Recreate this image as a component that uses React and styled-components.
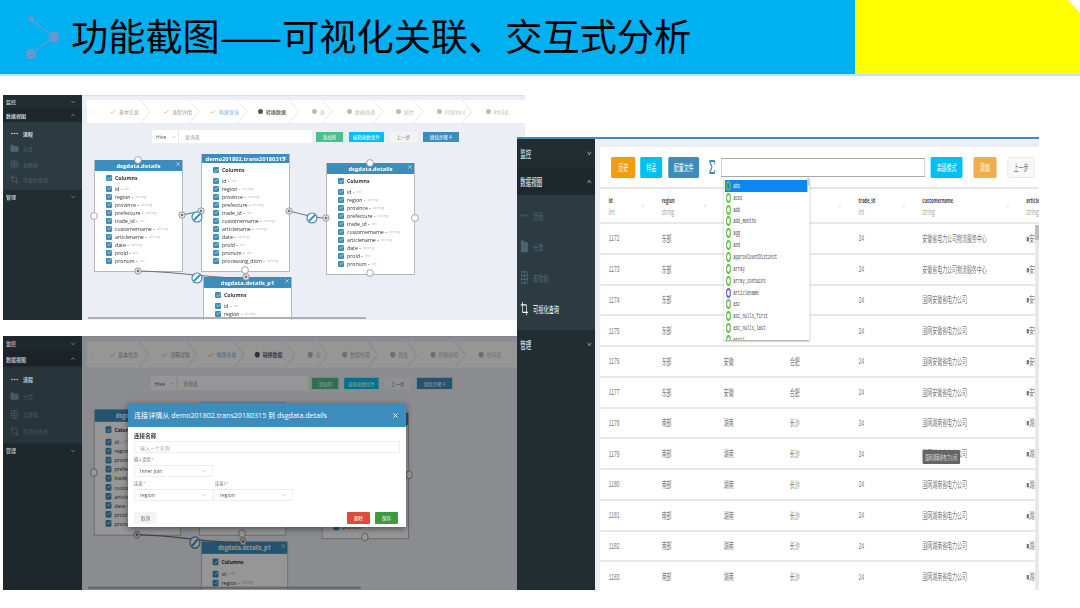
import React from "react";
import styled, { createGlobalStyle } from "styled-components";
import {
  Check,
  ChevronDown,
  ChevronLeft,
  ChevronUp,
  Crop,
  Ellipsis,
  Folder,
  FolderInput,
  Sigma,
  Table,
  X,
} from "lucide-react";

const CJK = `"Liberation Sans", "Noto Sans CJK SC", sans-serif`;
const LATIN = `"Open Sans", "Noto Sans CJK SC", sans-serif`;

// the right-hand screenshot is squeezed horizontally in the slide
const RIGHT_SX = 0.55;

//////////
// STYLE
//////////

const GlobalStyle = createGlobalStyle`
  html, body {
    margin: 0;
    padding: 0;
    background: #fff;
    width: 1080px;
    height: 608px;
    overflow: hidden;
    font-family: ${CJK};
  }
  * { box-sizing: border-box; }
`;

const Slide = styled.div`
  width: 1080px;
  height: 608px;
  background: #fff;
  overflow: hidden;
`;

const Banner = styled.header`
  display: flex;
  height: 76px;
  border-bottom: 2px solid #bfe6f6;
`;

const BannerBlue = styled.div`
  width: 855px;
  background: #00b0f0;
  display: flex;
  align-items: center;
  padding-left: 23px;
`;

const BannerYellow = styled.div`
  flex: 1;
  background: #ffff00;
  clip-path: polygon(0 0, 213px 0, 225px 13px, 225px 100%, 0 100%);
`;

const BannerTitle = styled.h1`
  margin: 0 0 3px 12px;
  font-family: "Noto Sans CJK SC", sans-serif;
  font-weight: 400;
  font-size: 37.2px;
  line-height: 1;
  color: #000;
  white-space: nowrap;
`;

const Body = styled.div`
  display: flex;
  padding-top: 19px;
`;

const LeftColumn = styled.div`
  width: 525px;
  flex-shrink: 0;
`;

const TopFrame = styled.div`
  margin-left: 3px;
  width: 522px;
  height: 225px;
  overflow: hidden;
  filter: blur(0.6px);
`;

const LowerFrame = styled.div`
  position: relative;
  margin: 16px 0 0 3px;
  width: 514px;
  height: 254px;
  overflow: hidden;
  filter: blur(0.6px);
`;

const Designer = styled.div`
  display: flex;
  width: 522px;
  height: 225px;
  transform: scaleY(${(p) => p.$sy});
  transform-origin: left top;
`;

const Side = styled.nav`
  width: 79px;
  flex-shrink: 0;
  background: #222d32;
  color: #b8c7ce;
  font-size: 5px;
`;

const SideHead = styled.div`
  display: flex;
  justify-content: space-between;
  align-items: center;
  height: ${(p) => p.$h}px;
  padding: 0 6px 0 3px;
  font-weight: 700;
  background: ${(p) => (p.$open ? "#1e282c" : "transparent")};
  color: ${(p) => (p.$open ? "#c8d4d9" : "#b8c7ce")};
`;

const SideGroup = styled.div`
  background: #2c3b41;
  padding: 4px 0 3px;
`;

const SideItem = styled.div`
  display: flex;
  align-items: center;
  gap: 4px;
  height: 15.3px;
  padding-left: 7px;
  color: ${(p) => (p.$on ? "#dfe6e9" : "#4b646f")};
  font-weight: ${(p) => (p.$on ? 700 : 400)};
`;

const MainPane = styled.div`
  width: 443px;
  flex-shrink: 0;
  height: 100%;
  background: #ebeef4;
  border-top: 1px solid #d6e4ef;
  padding-top: 4px;
  display: flex;
  flex-direction: column;
  transform: scaleX(${(p) => p.$sx});
  transform-origin: left top;
`;

const Steps = styled.div`
  display: flex;
  align-items: center;
  height: 23px;
  margin-left: 5px;
  flex-shrink: 0;
  background: #fff;
`;

const Step = styled.div`
  position: relative;
  display: flex;
  align-items: center;
  gap: 3px;
  height: 100%;
  width: ${(p) => p.$w}px;
  flex-shrink: 0;
  padding-left: ${(p) => p.$pad}px;
  font-size: 5px;
  white-space: nowrap;
  color: ${(p) => p.$color};
  font-weight: ${(p) => (p.$bold ? 700 : 400)};
`;

const StepDot = styled.span`
  width: 5px;
  height: 5px;
  border-radius: 50%;
  background: ${(p) => p.$color};
  flex-shrink: 0;
`;

const StepArrow = styled.svg`
  position: absolute;
  right: 0;
  top: 0;
`;

const Toolbar = styled.div`
  display: flex;
  align-items: center;
  height: 13px;
  margin: 7px 0 7px 70px;
  flex-shrink: 0;
`;

const EngineSelect = styled.div`
  display: flex;
  align-items: center;
  justify-content: space-between;
  width: 26px;
  height: 100%;
  padding: 0 2px 0 4px;
  background: #fff;
  font: 5px ${LATIN};
  color: #555;
`;

const QueryInput = styled.div`
  display: flex;
  align-items: center;
  width: 134px;
  height: 100%;
  padding-left: 6px;
  background: #fff;
  border-left: 1px solid #e6e6e6;
  font-size: 5px;
  color: #999;
`;

const FlatButton = styled.div`
  display: flex;
  align-items: center;
  justify-content: center;
  width: ${(p) => p.$w}px;
  height: 10px;
  margin-left: ${(p) => p.$ml}px;
  background: ${(p) => p.$bg};
  color: ${(p) => p.$fg || "#fff"};
  font-size: 4.5px;
`;

const Canvas = styled.div`
  position: relative;
  flex: 1;
  overflow: hidden;
`;

const Wires = styled.svg`
  position: absolute;
  inset: 0;
  width: 100%;
  height: 100%;
  z-index: 2;
`;

const Node = styled.div`
  position: absolute;
  left: ${(p) => p.$x}px;
  top: ${(p) => p.$y}px;
  width: 89px;
  background: #fff;
  border: 1.5px solid #b5b8bc;
  border-top: 0;
  padding-bottom: 6px;
  z-index: 1;
`;

const NodeHead = styled.div`
  position: relative;
  display: flex;
  align-items: center;
  justify-content: center;
  height: ${(p) => p.$h}px;
  background: #3c8dbc;
  color: #fff;
  font: 700 5.8px ${LATIN};
  white-space: nowrap;
  overflow: hidden;
`;

const NodeClose = styled(X)`
  position: absolute;
  right: 1px;
  top: 1px;
  width: 6px;
  height: 6px;
`;

const FieldList = styled.div`
  padding: 3px 0 0 11px;
`;

const Field = styled.div`
  display: flex;
  align-items: center;
  gap: 2px;
  height: 8px;
  font: 5.2px ${LATIN};
  color: #333;
  white-space: nowrap;
  margin-bottom: ${(p) => (p.$title ? "2.5px" : "0")};
  font-weight: ${(p) => (p.$title ? 700 : 400)};
`;

const FieldType = styled.span`
  color: #bbb;
  font-size: 4.2px;
`;

const Box = styled.span`
  display: flex;
  align-items: center;
  justify-content: center;
  width: 6px;
  height: 6px;
  margin-right: 1px;
  border-radius: 1px;
  background: #3c8dbc;
  color: #fff;
  flex-shrink: 0;
`;

const HScroll = styled.div`
  position: absolute;
  left: 6px;
  bottom: 1px;
  width: 278px;
  height: 2px;
  background: #aeb0b3;
  z-index: 3;
`;

const Dim = styled.div`
  position: absolute;
  inset: 0;
  background: linear-gradient(
    to right,
    rgba(0, 0, 0, 0.12) 79px,
    rgba(0, 0, 0, 0.41) 79px
  );
`;

const Dialog = styled.div`
  position: absolute;
  left: 125px;
  top: 67px;
  width: 278px;
  height: 124px;
  background: #fff;
  box-shadow: 0 2px 6px rgba(0, 0, 0, 0.45);
  display: flex;
  flex-direction: column;
`;

const DialogHead = styled.div`
  display: flex;
  align-items: center;
  justify-content: space-between;
  flex-shrink: 0;
  height: 24px;
  padding: 0 7px 0 6px;
  background: #3c8dbc;
  color: #fff;
  font: 7.1px ${LATIN};
  white-space: nowrap;
`;

const DialogBody = styled.div`
  flex: 1;
  padding: 4px 6px 3px;
  display: flex;
  flex-direction: column;
`;

const DialogLabel = styled.div`
  height: ${(p) => p.$h}px;
  font-size: ${(p) => (p.$strong ? "5.6px" : "4.2px")};
  font-weight: ${(p) => (p.$strong ? 700 : 400)};
  color: ${(p) => (p.$strong ? "#333" : "#777")};
  width: ${(p) => p.$w || "auto"};
  white-space: nowrap;
  display: flex;
  align-items: center;
`;

const DialogInput = styled.div`
  display: flex;
  align-items: center;
  height: 12px;
  padding-left: 5px;
  border: 1px solid #eee;
  font-size: 5px;
  color: #aaa;
`;

const DialogRow = styled.div`
  display: flex;
  gap: 1px;
`;

const DialogSelect = styled.div`
  display: flex;
  align-items: center;
  justify-content: space-between;
  width: 79px;
  height: 12px;
  padding: 0 6px 0 5px;
  border: 1px solid #eee;
  font: 5px ${LATIN};
  color: #555;
`;

const DialogFooter = styled.div`
  display: flex;
  margin-top: auto;
  gap: 5px;
`;

const DialogButton = styled.div`
  display: flex;
  align-items: center;
  justify-content: center;
  width: 23px;
  height: 12px;
  margin-left: ${(p) => (p.$push ? "auto" : "0")};
  margin-right: ${(p) => (p.$end ? "2px" : "0")};
  background: ${(p) => p.$bg};
  color: ${(p) => p.$fg || "#fff"};
  font-size: 4.6px;
  border-radius: 1px;
`;

// right screenshot: laid out wide, then squeezed
const RightFrame = styled.div`
  position: relative;
  z-index: 4;
  margin: 42px 0 0 -8px;
  width: 522px;
  height: 453px;
  overflow: hidden;
  filter: blur(0.5px);
`;

const RightInner = styled.div`
  display: flex;
  width: ${522 / RIGHT_SX}px;
  height: 453px;
  transform: scaleX(${RIGHT_SX});
  transform-origin: left top;
`;

const BigSide = styled.nav`
  width: 142px;
  flex-shrink: 0;
  background: #222d32;
  border-top: 2px solid #3c8dbc;
  color: #b8c7ce;
  font-size: 10px;
`;

const BigHead = styled.div`
  display: flex;
  justify-content: space-between;
  align-items: center;
  height: 28px;
  padding: 0 5px 0 6px;
  font-weight: 700;
  background: ${(p) => (p.$open ? "#1e282c" : "transparent")};
`;

const BigGroup = styled.div`
  background: #2c3b41;
  padding: 5px 0 6px;
`;

const BigItem = styled.div`
  display: flex;
  align-items: center;
  gap: 8px;
  height: 31px;
  padding-left: 6px;
  font-size: 9.5px;
  color: ${(p) => (p.$on ? "#fff" : "#4b646f")};
`;

const BigMain = styled.div`
  position: relative;
  flex: 1;
  min-width: 0;
  background: #ebeef4;
  border-top: 2px solid #3c8dbc;
  padding: 8px 0 0 9px;
  overflow: hidden;
`;

const Panel = styled.div`
  background: #fff;
  height: 100%;
`;

const BigToolbar = styled.div`
  display: flex;
  align-items: center;
  height: 42px;
  padding-left: 20px;
  border-bottom: 2px solid #e6e6e6;
`;

const BigButton = styled.div`
  display: flex;
  align-items: center;
  justify-content: center;
  width: ${(p) => p.$w}px;
  height: 21px;
  margin-left: ${(p) => p.$ml}px;
  background: ${(p) => p.$bg};
  color: ${(p) => p.$fg || "#fff"};
  border: ${(p) => (p.$fg ? "1px solid #e5e5e5" : "0")};
  border-radius: 2px;
  font-size: 9px;
  flex-shrink: 0;
`;

const SumIcon = styled(Sigma)`
  margin-left: 15px;
  color: #3c8dbc;
  flex-shrink: 0;
`;

const SearchField = styled.div`
  width: 371px;
  height: 19px;
  margin-left: 7px;
  background: #fff;
  border: 1px solid #a9a9a9;
  flex-shrink: 0;
`;

const Row = styled.div`
  display: grid;
  grid-template-columns: 96px 113px 120px 125px 116px 189px 200px;
  align-items: center;
  height: ${(p) => p.$h}px;
  padding-left: 16px;
  border-bottom: 2px solid #e8e8e8;
  font-size: 9px;
  color: #777;
`;

const HeadCell = styled.div`
  display: flex;
  align-items: center;
  justify-content: space-between;
  padding-right: 30px;
  color: #d0d0d0;
`;

const HeadName = styled.div`
  font: 700 7.4px/12px ${LATIN};
  color: #444;
  white-space: nowrap;
`;

const HeadType = styled.div`
  font: 8.5px/12px ${LATIN};
  color: #999;
`;

const Cell = styled.div`
  position: relative;
  white-space: nowrap;
  overflow: ${(p) => (p.$open ? "visible" : "hidden")};
`;

const Tip = styled.div`
  position: absolute;
  left: 0;
  top: 3px;
  width: 69px;
  height: 14px;
  display: flex;
  align-items: center;
  justify-content: center;
  border-radius: 2px;
  background: #666;
  color: #ddd;
  font-size: 6.5px;
  z-index: 1;
`;

const VScroll = styled.div`
  position: absolute;
  right: 0;
  top: 86px;
  bottom: 0;
  width: 7px;
  background: #e8e8e8;
`;

const VThumb = styled.div`
  width: 100%;
  height: 15px;
  background: #bdbdbd;
`;

const Suggest = styled.div`
  position: absolute;
  left: 234px;
  top: 39px;
  width: 156px;
  height: 162px;
  padding: 2px 4px 0 2px;
  background: #fff;
  box-shadow: 0 1px 3px rgba(0, 0, 0, 0.45);
  overflow: hidden;
  z-index: 3;
`;

const SuggestRow = styled.div`
  display: flex;
  align-items: center;
  gap: 4px;
  height: 11.85px;
  padding-left: 2px;
  font: 7px "Liberation Mono", monospace;
  color: ${(p) => (p.$on ? "#fff" : "#444")};
  background: ${(p) => (p.$on ? "#0a86f5" : "transparent")};
`;

const Ring = styled.span`
  width: 9px;
  height: 10px;
  border-radius: 50%;
  border: 2px solid ${(p) => p.$color};
  flex-shrink: 0;
`;

const SuggestThumb = styled.div`
  position: absolute;
  right: 0;
  top: 0;
  width: 4px;
  height: 8px;
  background: #c4c4c4;
`;

//////////
// DATA
//////////

const FIELDS = {
  details: [
    ["id", "int"],
    ["region", "string"],
    ["province", "string"],
    ["prefecture", "string"],
    ["trade_id", "int"],
    ["customername", "string"],
    ["articlename", "string"],
    ["date", "string"],
    ["prold", "int"],
    ["pronum", "int"],
  ],
};

const NODES = [
  { name: "dsgdata.details", x: 12, y: 10, head: 11, fields: FIELDS.details },
  {
    name: "demo201802.trans20180315",
    x: 119,
    y: 4,
    head: 9,
    fields: [...FIELDS.details, ["processing_dttm", "string"]],
  },
  { name: "dsgdata.details", x: 244, y: 13, head: 11, fields: FIELDS.details },
  {
    name: "dsgdata.details_p1",
    x: 121,
    y: 127,
    head: 11,
    fields: FIELDS.details.slice(0, 2),
  },
];

const STEPS = [
  { label: "基本信息", w: 53, pad: 13, done: true, color: "#999" },
  { label: "流程详情", w: 49, pad: 13, done: true, color: "#999" },
  { label: "构建查询", w: 48, pad: 11, done: true, color: "#7fb1d3" },
  { label: "转换数据", w: 52, pad: 11, dot: "#555", color: "#666", bold: true },
  { label: "表", w: 33, pad: 13, dot: "#bbb", color: "#bbb" },
  { label: "数据处理", w: 51, pad: 15, dot: "#bbb", color: "#bbb" },
  { label: "属性", w: 40, pad: 13, dot: "#bbb", color: "#bbb" },
  { label: "控制访问", w: 49, pad: 14, dot: "#bbb", color: "#bbb" },
  { label: "时间表", w: 40, pad: 14, dot: "#bbb", color: "#bbb" },
];

const FUNCTIONS = [
  "abs",
  "acos",
  "add",
  "add_months",
  "agg",
  "and",
  "approxCountDistinct",
  "array",
  "array_contains",
  "articlename",
  "asc",
  "asc_nulls_first",
  "asc_nulls_last",
  "ascii",
];

// province and prefecture headings sit behind the open suggestion list
const COLUMNS = [
  ["id", "int"],
  ["region", "string"],
  ["", "", true],
  ["", ""],
  ["trade_id", "int"],
  ["customername", "string"],
  ["articlename", "string"],
];

const customerOf = (id) => {
  if (id < 1174) return "安徽省电力公司物流服务中心";
  return id < 1178 ? "国网安徽省电力公司" : "国网湖南省电力公司";
};

const ROWS = Array.from({ length: 12 }, (_, i) => {
  const id = 1172 + i;
  const east = id < 1178;
  const covered = id < 1176;
  return {
    id,
    region: east ? "东部" : "南部",
    province: covered ? "" : east ? "安徽" : "湖南",
    city: covered ? "" : east ? "合肥" : "长沙",
    customer: customerOf(id),
    article: east ? "■安徽省电力公司" : "■湖南省电力公司",
  };
});

//////////
// REACT
//////////

const LinkLogo = () => (
  <svg width="36" height="46" viewBox="0 0 36 46">
    <path d="M8 5 L31 23 L8 40" fill="none" stroke="#5f9bd3" strokeWidth="1.4" />
    <circle cx="8" cy="5" r="3" fill="#5f9bd3" />
    <circle cx="31" cy="23" r="5.5" fill="#5f9bd3" />
    <circle cx="8" cy="40" r="5.5" fill="#5f9bd3" />
  </svg>
);

const Pencil = ({ x, y }) => (
  <g>
    <circle cx={x} cy={y} r="5" fill="#fff" stroke="#3c8dbc" strokeWidth="1.2" />
    <path d={`M${x - 3} ${y + 3} L${x + 3} ${y - 3}`} stroke="#3c8dbc" strokeWidth="2" />
  </g>
);

const OpenPort = ({ x, y }) => (
  <circle cx={x} cy={y} r="3.4" fill="#fff" stroke="#8d9196" strokeWidth="0.8" />
);

const LinkedPort = ({ x, y }) => (
  <g>
    <circle cx={x} cy={y} r="3.2" fill="#e4e4e4" stroke="#85898d" strokeWidth="0.8" />
    <circle cx={x} cy={y} r="1.3" fill="#777" />
  </g>
);

const SchemaNode = ({ name, x, y, head, fields }) => (
  <Node $x={x} $y={y}>
    <NodeHead $h={head}>
      {name}
      <NodeClose strokeWidth={2} />
    </NodeHead>
    <FieldList>
      <Field $title>
        <Box>
          <Check size={5} strokeWidth={3} />
        </Box>
        Columns
      </Field>
      {fields.map(([field, type]) => (
        <Field key={field}>
          <Box>
            <Check size={5} strokeWidth={3} />
          </Box>
          {field} - <FieldType>{type}</FieldType>
        </Field>
      ))}
    </FieldList>
  </Node>
);

const DesignerShot = ({ sy = 1, sx = 1 }) => (
  <Designer $sy={sy}>
    <Side>
      <SideHead $h={13}>
        监控
        <ChevronDown size={6} />
      </SideHead>
      <SideHead $h={14} $open>
        数据视图
        <ChevronUp size={6} />
      </SideHead>
      <SideGroup>
        <SideItem $on>
          <Ellipsis size={9} />
          流程
        </SideItem>
        <SideItem>
          <Folder size={9} fill="#4b646f" />
          分类
        </SideItem>
        <SideItem>
          <Table size={9} />
          表数据
        </SideItem>
        <SideItem>
          <Crop size={9} />
          可视化查询
        </SideItem>
      </SideGroup>
      <SideHead $h={13}>
        管理
        <ChevronDown size={6} />
      </SideHead>
    </Side>
    <MainPane $sx={sx}>
      <Steps>
        <Step $w={10} $pad={3} $color="#ccc">
          <ChevronLeft size={6} />
        </Step>
        {STEPS.map((s) => (
          <Step key={s.label} $w={s.w} $pad={s.pad} $color={s.color} $bold={s.bold}>
            {s.done ? (
              <Check size={6} color="#f0a35e" strokeWidth={3} />
            ) : (
              <StepDot $color={s.dot} />
            )}
            {s.label}
            {s.label !== "时间表" && (
              <StepArrow width="10" height="23" viewBox="0 0 10 23">
                <polyline points="0,0 10,11.5 0,23" fill="none" stroke="#e3e6ec" />
              </StepArrow>
            )}
          </Step>
        ))}
      </Steps>
      <Toolbar>
        <EngineSelect>
          Hive
          <ChevronDown size={4} />
        </EngineSelect>
        <QueryInput>查询表</QueryInput>
        <FlatButton $w={27} $ml={4} $bg="#4cc08c">
          添加列
        </FlatButton>
        <FlatButton $w={35} $ml={6} $bg="#00c0ef">
          编辑函数组件
        </FlatButton>
        <FlatButton $w={27} $ml={6} $bg="#f4f4f4" $fg="#666">
          上一步
        </FlatButton>
        <FlatButton $w={36} $ml={6} $bg="#3c8dbc">
          继续步骤 4
        </FlatButton>
      </Toolbar>
      <Canvas>
        {NODES.map((n, i) => (
          <SchemaNode key={i} {...n} />
        ))}
        <Wires viewBox="0 0 443 170">
          <path d="M100 65 L119 61" stroke="#6e7276" fill="none" />
          <path d="M207 61 C220 64 232 68 244 68" stroke="#6e7276" fill="none" />
          <path d="M56 121 C100 122 125 128 164 128" stroke="#6e7276" fill="none" />
          <OpenPort x={56} y={10} />
          <OpenPort x={12} y={66} />
          <OpenPort x={163} y={120} />
          <OpenPort x={288} y={13} />
          <OpenPort x={333} y={68} />
          <OpenPort x={288} y={123} />
          <LinkedPort x={100} y={65} />
          <LinkedPort x={119} y={61} />
          <LinkedPort x={207} y={61} />
          <LinkedPort x={244} y={68} />
          <LinkedPort x={56} y={121} />
          <LinkedPort x={164} y={127} />
          <Pencil x={115} y={67} />
          <Pencil x={115} y={128} />
          <Pencil x={230} y={68} />
        </Wires>
        <HScroll />
      </Canvas>
    </MainPane>
  </Designer>
);

const JoinDialog = () => (
  <Dialog>
    <DialogHead>
      连接详情从 demo201802.trans20180315 到 dsgdata.details
      <X size={7} strokeWidth={3} />
    </DialogHead>
    <DialogBody>
      <DialogLabel $strong $h={10}>
        连接名称
      </DialogLabel>
      <DialogInput>输入一个名称</DialogInput>
      <DialogLabel $h={12}>输入类型 *</DialogLabel>
      <DialogSelect>
        Inner Join
        <ChevronDown size={4} />
      </DialogSelect>
      <DialogRow>
        <DialogLabel $h={12} $w="80px">
          连接 *
        </DialogLabel>
        <DialogLabel $h={12}>连接2 *</DialogLabel>
      </DialogRow>
      <DialogRow>
        <DialogSelect>
          region
          <ChevronDown size={4} />
        </DialogSelect>
        <DialogSelect>
          region
          <ChevronDown size={4} />
        </DialogSelect>
      </DialogRow>
      <DialogFooter>
        <DialogButton $bg="#f4f4f4" $fg="#666">
          取消
        </DialogButton>
        <DialogButton $push $bg="#dd4b39">
          删除
        </DialogButton>
        <DialogButton $end $bg="#3f9b3f">
          保存
        </DialogButton>
      </DialogFooter>
    </DialogBody>
  </Dialog>
);

const QueryShot = () => (
  <RightInner>
    <BigSide>
      <BigHead>
        监控
        <ChevronDown size={11} />
      </BigHead>
      <BigHead $open>
        数据视图
        <ChevronUp size={11} />
      </BigHead>
      <BigGroup>
        <BigItem>
          <Ellipsis size={15} />
          流程
        </BigItem>
        <BigItem>
          <FolderInput size={15} fill="#4b646f" />
          分类
        </BigItem>
        <BigItem>
          <Table size={15} />
          表数据
        </BigItem>
        <BigItem $on>
          <Crop size={15} />
          可视化查询
        </BigItem>
      </BigGroup>
      <BigHead>
        管理
        <ChevronDown size={11} />
      </BigHead>
    </BigSide>
    <BigMain>
      <Panel>
        <BigToolbar>
          <BigButton $w={44} $ml={0} $bg="#f39c12">
            历史
          </BigButton>
          <BigButton $w={40} $ml={9} $bg="#00c0ef">
            样品
          </BigButton>
          <BigButton $w={56} $ml={11} $bg="#3c8dbc">
            配置文件
          </BigButton>
          <SumIcon size={18} strokeWidth={2.5} />
          <SearchField />
          <BigButton $w={58} $ml={10} $bg="#00c0ef">
            高级模式
          </BigButton>
          <BigButton $w={42} $ml={20} $bg="#f0ad4e">
            添加
          </BigButton>
          <BigButton $w={49} $ml={20} $bg="#f8f8f8" $fg="#777">
            上一步
          </BigButton>
        </BigToolbar>
        <Row $h={35}>
          {COLUMNS.map(([name, type], i) => (
            <HeadCell key={i}>
              <div>
                <HeadName>{name}</HeadName>
                <HeadType>{type}</HeadType>
              </div>
              <ChevronDown size={8} />
            </HeadCell>
          ))}
        </Row>
        {ROWS.map((r) => (
          <Row key={r.id} $h={30.75}>
            <Cell>{r.id}</Cell>
            <Cell>{r.region}</Cell>
            <Cell>{r.province}</Cell>
            <Cell>{r.city}</Cell>
            <Cell>24</Cell>
            <Cell $open={r.id === 1179}>
              {r.id === 1179 ? (
                <>
                  <Tip>国网湖南省电力公司</Tip>
                  {r.customer}
                </>
              ) : (
                r.customer
              )}
            </Cell>
            <Cell>{r.article}</Cell>
          </Row>
        ))}
      </Panel>
      <VScroll>
        <VThumb />
      </VScroll>
      <Suggest>
        <SuggestThumb />
        {FUNCTIONS.map((fn) => (
          <SuggestRow key={fn} $on={fn === "abs"}>
            <Ring $color={fn === "articlename" ? "#6a68cf" : "#69bd4f"} />
            {fn}
          </SuggestRow>
        ))}
      </Suggest>
    </BigMain>
  </RightInner>
);

const App = () => (
  <Slide>
    <GlobalStyle />
    <Banner>
      <BannerBlue>
        <LinkLogo />
        <BannerTitle>功能截图——可视化关联、交互式分析</BannerTitle>
      </BannerBlue>
      <BannerYellow />
    </Banner>
    <Body>
      <LeftColumn>
        <TopFrame>
          <DesignerShot />
        </TopFrame>
        <LowerFrame>
          <DesignerShot sy={254 / 225} sx={0.982} />
          <Dim />
          <JoinDialog />
        </LowerFrame>
      </LeftColumn>
      <RightFrame>
        <QueryShot />
      </RightFrame>
    </Body>
  </Slide>
);

export default App;
